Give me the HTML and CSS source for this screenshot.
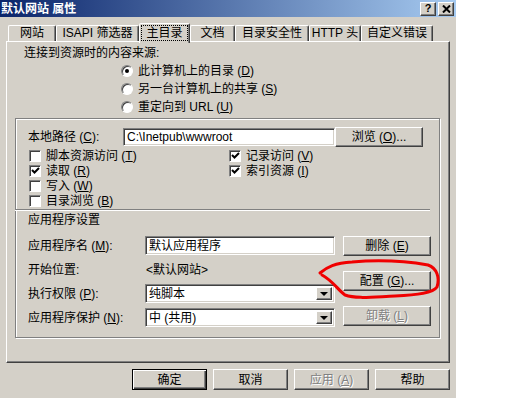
FILE: index.html
```html
<!DOCTYPE html>
<html lang="zh-CN">
<head>
    <meta charset="UTF-8">
    <title>默认网站 属性</title>
    <link rel="stylesheet" href="styles.css">
</head>

<body>
    <div id="dialog">
        <div class="titlebar">
            <span class="title">默认网站 属性</span>
            <span class="cap-btns">
                <span class="cap-btn">?</span>
                <span class="cap-btn">
                    <svg width="9" height="8" viewBox="0 0 9 8"><path d="M1 0.5 L8 7.5 M8 0.5 L1 7.5" stroke="#000" stroke-width="2"/></svg>
                </span>
            </span>
        </div>

        <ul class="tabs">
            <li class="tab w-site">网站</li>
            <li class="tab w-isapi">ISAPI 筛选器</li>
            <li class="tab active w-home"><span class="focus">主目录</span></li>
            <li class="tab w-doc">文档</li>
            <li class="tab w-sec">目录安全性</li>
            <li class="tab w-http">HTTP 头</li>
            <li class="tab w-err">自定义错误</li>
        </ul>

        <div class="panel">
            <div class="source-label">连接到资源时的内容来源:</div>
            <div class="radios">
                <div class="radio"><span class="dot on"></span><span>此计算机上的目录 (<u>D</u>)</span></div>
                <div class="radio"><span class="dot"></span><span>另一台计算机上的共享 (<u>S</u>)</span></div>
                <div class="radio"><span class="dot"></span><span>重定向到 URL (<u>U</u>)</span></div>
            </div>

            <div class="frame">
                <div class="path-row">
                    <span class="path-label">本地路径 (<u>C</u>):</span>
                    <div class="field path">C:\Inetpub\wwwroot</div>
                    <div class="btn side"><span>浏览 (<u>O</u>)...</span></div>
                </div>

                <div class="checks">
                    <div class="check"><span class="box"></span><span>脚本资源访问 (<u>T</u>)</span></div>
                    <div class="check"><span class="box"><svg width="9" height="9" viewBox="0 0 9 9"><path d="M1 4 L3.5 6.5 L8 2" stroke="#000" stroke-width="2" fill="none"/></svg></span><span>读取 (<u>R</u>)</span></div>
                    <div class="check"><span class="box"></span><span>写入 (<u>W</u>)</span></div>
                    <div class="check"><span class="box"></span><span>目录浏览 (<u>B</u>)</span></div>
                    <div class="check"><span class="box"><svg width="9" height="9" viewBox="0 0 9 9"><path d="M1 4 L3.5 6.5 L8 2" stroke="#000" stroke-width="2" fill="none"/></svg></span><span>记录访问 (<u>V</u>)</span></div>
                    <div class="check"><span class="box"><svg width="9" height="9" viewBox="0 0 9 9"><path d="M1 4 L3.5 6.5 L8 2" stroke="#000" stroke-width="2" fill="none"/></svg></span><span>索引资源 (<u>I</u>)</span></div>
                </div>

                <div class="sep"></div>
                <div class="group-title">应用程序设置</div>

                <div class="app-body">
                    <div class="app-rows">
                        <div class="app-row">
                            <span class="app-label">应用程序名 (<u>M</u>):</span>
                            <div class="field app">默认应用程序</div>
                        </div>
                        <div class="app-row">
                            <span class="app-label">开始位置:</span>
                            <span class="app-value">&lt;默认网站&gt;</span>
                        </div>
                        <div class="app-row">
                            <span class="app-label">执行权限 (<u>P</u>):</span>
                            <div class="field app select">纯脚本<span class="drop"></span></div>
                        </div>
                        <div class="app-row">
                            <span class="app-label">应用程序保护 (<u>N</u>):</span>
                            <div class="field app select">中 (共用)<span class="drop"></span></div>
                        </div>
                    </div>
                    <div class="app-btns">
                        <div class="btn side"><span>删除 (<u>E</u>)</span></div>
                        <div class="btn side"><span>配置 (<u>G</u>)...</span></div>
                        <div class="btn side disabled"><span>卸载 (<u>L</u>)</span></div>
                    </div>
                </div>
            </div>
        </div>

        <div class="footer">
            <div class="btn foot default">确定</div>
            <div class="btn foot">取消</div>
            <div class="btn foot disabled"><span>应用 (<u>A</u>)</span></div>
            <div class="btn foot">帮助</div>
        </div>

        <!-- 红笔圈出配置按钮 -->
        <svg class="mark" width="456" height="398" viewBox="0 0 456 398">
            <path d="M320 273 C327 267 335 263 352 262 C375 260 405 261 428 265 C437 268 440 278 437 287 C433 293 418 295 395 296 C372 297 356 299 345 295 C338 290 333 281 322 275"
                  fill="none" stroke="#f00000" stroke-width="3" stroke-linecap="round"/>
        </svg>
    </div>
</body>

</html>
```

FILE: styles.css
```css
* {
    box-sizing: border-box;
}

body {
    margin: 0;
    background: #fff;
    font: 12px/14px "Liberation Sans", "Noto Sans CJK SC", sans-serif;
    color: #000;
}

u {
    text-decoration: underline;
}

#dialog {
    position: relative;
    width: 456px;
    height: 398px;
    background: #d4d0c8;
}

/* 标题栏 */
.titlebar {
    height: 17px;
    display: flex;
    justify-content: space-between;
    align-items: center;
    padding: 0 2px 0 1px;
    background: linear-gradient(to right, #0a246a, #a6caf0);
}

.title {
    color: #fff;
    font-weight: bold;
}

.cap-btns {
    display: flex;
    gap: 2px;
}

.cap-btn {
    width: 16px;
    height: 14px;
    display: flex;
    align-items: center;
    justify-content: center;
    background: #d4d0c8;
    border: 1px solid;
    border-color: #fff #404040 #404040 #fff;
    box-shadow: inset -1px -1px #808080;
    font: bold 11px/1 "Liberation Sans", sans-serif;
}

/* 选项卡 */
.tabs {
    list-style: none;
    margin: 4px 0 0;
    padding: 0 0 0 8px;
    height: 20px;
    display: flex;
    align-items: flex-end;
}

.tab {
    height: 16px;
    border: 1px solid;
    border-bottom: none;
    border-color: #fff #404040 transparent #fff;
    border-radius: 2px 2px 0 0;
    box-shadow: inset -1px 0 #808080;
    text-align: center;
    white-space: nowrap;
}

.tab.active {
    height: 20px;
    margin-bottom: -2px;
    padding-top: 1px;
    position: relative;
    z-index: 1;
    background: #d4d0c8;
}

.focus {
    display: inline-block;
    padding: 0 4px;
    border: 1px dotted #000;
}

.w-site { width: 48px; }
.w-isapi { width: 83px; }
.w-home { width: 51px; }
.w-doc { width: 45px; }
.w-sec { width: 74px; }
.w-http { width: 52px; }
.w-err { width: 72px; }

/* 主面板 */
.panel {
    margin-left: 6px;
    width: 444px;
    height: 322px;
    padding-top: 4px;
    border: 1px solid;
    border-color: #fff #404040 #404040 #fff;
    box-shadow: inset -1px -1px #808080;
}

.source-label {
    margin-left: 17px;
}

.radios {
    margin: 2px 0 0 114px;
}

.radio {
    height: 18px;
    display: flex;
    align-items: center;
    gap: 5px;
}

.dot {
    width: 12px;
    height: 12px;
    border-radius: 50%;
    border: 1px solid;
    border-color: #808080 #fff #fff #808080;
    box-shadow: inset 1px 1px #404040;
    background: #fff;
    display: flex;
    align-items: center;
    justify-content: center;
}

.dot.on::after {
    content: "";
    width: 4px;
    height: 4px;
    border-radius: 50%;
    background: #000;
}

.frame {
    margin: 2px 0 0 8px;
    width: 425px;
    height: 220px;
    border: 1px solid #808080;
    box-shadow: inset 1px 1px #fff, 1px 1px #fff;
}

.path-row {
    margin-top: 8px;
    padding-left: 12px;
    height: 20px;
    display: flex;
    align-items: center;
}

.path-label {
    width: 95px;
}

.field {
    height: 19px;
    padding: 2px 0 0 3px;
    background: #fff;
    border: 1px solid;
    border-color: #808080 #fff #fff #808080;
    box-shadow: inset 1px 1px #404040, inset -1px -1px #d4d0c8;
    white-space: nowrap;
}

.field.path {
    width: 212px;
    height: 18px;
    padding-top: 1px;
}

.field.app {
    width: 190px;
}

.select {
    position: relative;
}

.drop {
    position: absolute;
    top: 2px;
    right: 2px;
    width: 16px;
    height: 13px;
    background: #d4d0c8;
    border: 1px solid;
    border-color: #fff #404040 #404040 #fff;
    box-shadow: inset -1px -1px #808080;
}

.drop::after {
    content: "";
    position: absolute;
    left: 3px;
    top: 4px;
    border: 4px solid transparent;
    border-top: 4px solid #000;
    border-bottom: none;
}

.checks {
    margin-top: 1px;
    padding-left: 13px;
    display: grid;
    grid-template-columns: 200px 200px;
    grid-template-rows: repeat(4, 15px);
    grid-auto-flow: column;
}

.check {
    display: flex;
    align-items: center;
    gap: 5px;
}

.box {
    width: 12px;
    height: 12px;
    background: #fff;
    border: 1px solid;
    border-color: #808080 #fff #fff #808080;
    box-shadow: inset 1px 1px #404040;
    display: flex;
    align-items: center;
    justify-content: center;
}

.sep {
    margin: 1px 9px 0 -1px;
    border-top: 1px solid #808080;
    height: 2px;
    box-shadow: inset 0 1px #fff;
}

.group-title {
    margin-top: 2px;
    padding-left: 12px;
}

.app-body {
    margin-top: 9px;
    padding-left: 12px;
    display: flex;
}

.app-rows {
    display: flex;
    flex-direction: column;
    gap: 5px;
}

.app-row {
    height: 19px;
    display: flex;
    align-items: center;
}

.app-label {
    width: 117px;
}

.app-value {
    padding-left: 1px;
}

.app-btns {
    margin-left: 8px;
    display: flex;
    flex-direction: column;
    gap: 15px;
}

/* 按钮 */
.btn {
    display: flex;
    align-items: center;
    justify-content: center;
    background: #d4d0c8;
    border: 1px solid;
    border-color: #fff #404040 #404040 #fff;
    box-shadow: inset -1px -1px #808080;
    white-space: nowrap;
}

.btn.side {
    width: 88px;
    height: 20px;
}

.btn.disabled {
    color: #808080;
    text-shadow: 1px 1px #fff;
}

.footer {
    margin-top: 6px;
    padding-right: 6px;
    display: flex;
    justify-content: flex-end;
    gap: 6px;
}

.btn.foot {
    width: 75px;
    height: 21px;
}

.btn.default {
    border-color: #000;
    box-shadow: inset 1px 1px #fff, inset -1px -1px #404040, inset -2px -2px #808080;
}

.mark {
    position: absolute;
    left: 0;
    top: 0;
    pointer-events: none;
}
```
